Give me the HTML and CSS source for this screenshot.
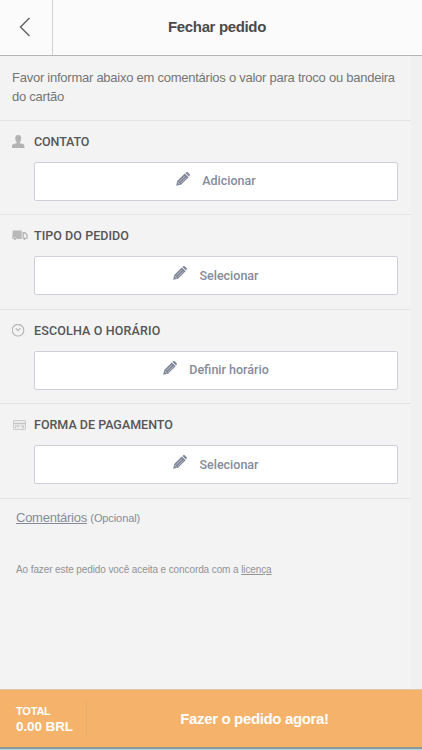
FILE: index.html
```html
<!DOCTYPE html>
<html lang="pt-BR">
<head>
<meta charset="utf-8">
<title>Fechar pedido</title>
<link rel="stylesheet" href="styles.css">
</head>
<body>
<svg class="defs" width="0" height="0">
  <symbol id="pencil" viewBox="0 0 14 14">
    <path fill="#7d8596" d="M.2 13.800 1.200 9 8.800 1.500l3.800 3.800-7.600 7.500zM9.500.9l1-.8q.6-.3 1.200.1l2 2q.4.6 0 1.200l-.7 1.100z"/>
    <path stroke="#d5d9e1" stroke-width=".7" fill="none" d="M3.300 9.500 8.800 4M4.800 11l5.500-5.500"/>
    <path stroke="#fff" stroke-width=".7" d="M1.700 10.200l2.100 2"/>
  </symbol>
</svg>
<header class="header">
  <a class="back"><svg width="12" height="20" viewBox="0 0 12 20"><path d="M10.500 1 1.500 10l9 9" fill="none" stroke="#666" stroke-width="1.500"/></svg></a>
  <h1 class="title">Fechar pedido</h1>
</header>
<main class="content">
  <p class="note">Favor informar abaixo em comentários o valor para troco ou bandeira<br>do cartão</p>
  <section class="step contact">
    <h2 class="label"><svg class="icon" width="16" height="14" viewBox="0 0 16 14"><path fill="#b3b3b3" d="M6.200 0Q9.200 0 9.200 3.400 9.200 5.600 7.800 7v1.200l3.200.9q1.400.5 1.400 2.100V13H0v-1.800q0-1.600 1.400-2.100l3.200-.9V7Q3.200 5.600 3.200 3.400 3.200 0 6.200 0z"/></svg><span>CONTATO</span></h2>
    <button class="choice"><svg class="pencil"><use href="#pencil"/></svg><span>Adicionar</span></button>
  </section>
  <section class="step kind">
    <h2 class="label"><svg class="icon" width="16" height="14" viewBox="0 0 16 14"><path fill="#b8b8b8" d="M.8 1.500H9.700V10H.2zM10.500 3h3l2.200 2.800V10h-5.200z"/><path fill="#f3f3f3" d="M12 4.800h1.300l1.200 2.200v1.500H12z"/><g fill="#aaa" stroke="#f3f3f3" stroke-width=".5"><circle cx="3" cy="9.800" r="1.400"/><circle cx="12.500" cy="9.800" r="1.400"/></g></svg><span>TIPO DO PEDIDO</span></h2>
    <button class="choice"><svg class="pencil"><use href="#pencil"/></svg><span>Selecionar</span></button>
  </section>
  <section class="step time">
    <h2 class="label"><svg class="icon" width="16" height="14" viewBox="0 0 16 14"><g fill="none" stroke="#b3b3b3" stroke-width="1.100"><circle cx="6" cy="6.200" r="5.800"/><path d="m3.800 4.300 2.300 2.300 2.300-2.600"/></g></svg><span>ESCOLHA O HORÁRIO</span></h2>
    <button class="choice"><svg class="pencil"><use href="#pencil"/></svg><span>Definir horário</span></button>
  </section>
  <section class="step payment">
    <h2 class="label"><svg class="icon" width="16" height="14" viewBox="0 0 16 14"><rect x="1.500" y="2.500" width="12" height="9" rx=".6" fill="#ededed" stroke="#cbcbcb"/><path d="M1.500 5.500h12" stroke="#c4c4c4" stroke-width="1.400"/><path d="M3 8h4.500m1.500 0h3M3 9.600h1m6.500 0H12" stroke="#bbb"/></svg><span>FORMA DE PAGAMENTO</span></h2>
    <button class="choice"><svg class="pencil"><use href="#pencil"/></svg><span>Selecionar</span></button>
  </section>
  <p class="comments"><a>Comentários</a> <small>(Opcional)</small></p>
  <p class="legal">Ao fazer este pedido você aceita e concorda com a <a>licença</a></p>
</main>
<footer class="footer">
  <div class="total"><span class="total-label">TOTAL</span><span class="total-value">0.00 BRL</span></div>
  <div class="submit">Fazer o pedido agora!</div>
</footer>
</body>
</html>
```

FILE: styles.css
```css
* { box-sizing: border-box; }
body {
  margin: 0;
  width: 422px;
  height: 750px;
  overflow: hidden;
  display: flex;
  flex-direction: column;
  background: #f0f0f0;
  font-family: "Liberation Sans", Arial, sans-serif;
}
.defs { display: none; }
h1, h2, p { margin: 0; }
.header {
  flex: none;
  display: flex;
  height: 56px;
  background: #fbfbfb;
  border-bottom: 1px solid #b8b4b5;
}
.back {
  width: 53px;
  padding: 17px 0 0 19px;
  border-right: 1px solid #d2d2d2;
}
.back svg { display: block; }
.title {
  flex: 1;
  padding-right: 41px;
  text-align: center;
  font-size: 15px;
  letter-spacing: -.35px;
  line-height: 53px;
  color: #4a4a4a;
}
.content {
  flex: 1;
  width: 411px;
  background: #f3f3f3;
}
.note {
  height: 63.5px;
  padding: 13px 0 0 12px;
  font-size: 13px;
  letter-spacing: -.25px;
  line-height: 18.5px;
  color: #757575;
  white-space: nowrap;
}
.step {
  height: 94.6px;
  padding: 12px 13px 0 12px;
  border-top: 1px solid #e4e4e5;
}
.label {
  display: flex;
  height: 18px;
  align-items: center;
  font: 500 12.5px/18px Roboto, sans-serif;
  color: #555;
}
.contact .label { letter-spacing: -.1px; }
.kind .label { letter-spacing: .05px; }
.time .label { letter-spacing: .15px; }
.icon { width: 16px; margin-right: 6px; flex: none; }
.choice {
  display: flex;
  width: 364px;
  height: 39px;
  margin: 11px 0 0 22px;
  padding: 0;
  align-items: center;
  justify-content: center;
  gap: 12px;
  background: #fff;
  border: 1px solid #cdd0d8;
  border-radius: 2px;
  font: 500 12.5px/18px Roboto, sans-serif;
  color: #858b9b;
}
.pencil { width: 14px; height: 14px; margin-bottom: 5px; }
.comments {
  height: 64px;
  padding: 9px 0 0 16px;
  border-top: 1px solid #e4e4e5;
  font-size: 13px;
  letter-spacing: -.25px;
  line-height: 20px;
  color: #858b9b;
}
.comments a, .legal a { text-decoration: underline; }
.comments small { font-size: 11px; letter-spacing: -.1px; }
.legal {
  padding-left: 16px;
  font-size: 10px;
  letter-spacing: -.1px;
  line-height: 16px;
  color: #929292;
}
.footer {
  flex: none;
  display: flex;
  height: 61px;
  align-items: center;
  background: #f5b26a;
  border-top: 1px solid #dfc5a6;
  box-shadow: inset 0 -1px #b4d0e4, inset 0 -3px #8d989c;
  color: #fff;
  font-weight: bold;
}
.total {
  display: flex;
  flex-direction: column;
  width: 87px;
  height: 36px;
  padding: 3px 0 0 16px;
  margin-bottom: 2px;
  border-right: 1px solid #eaad6b;
}
.total-label { font-size: 11px; letter-spacing: -.2px; line-height: 15px; }
.total-value { font-size: 13.500px; letter-spacing: -.1px; line-height: 15px; }
.submit {
  flex: 1;
  padding-bottom: 3px;
  text-align: center;
  font-size: 15px;
  letter-spacing: -.35px;
}
```
